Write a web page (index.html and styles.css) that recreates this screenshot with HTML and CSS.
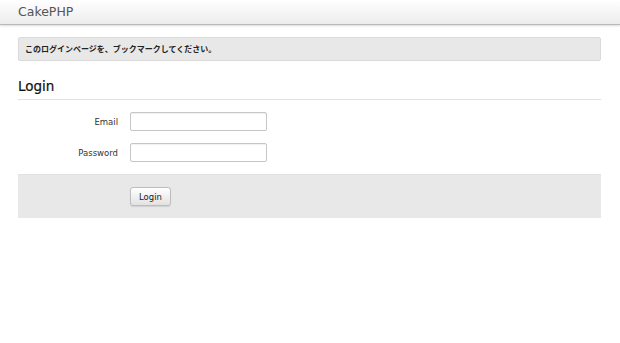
FILE: index.html
```html
<!DOCTYPE html>
<html lang="ja">
<head>
    <meta charset="UTF-8">
    <title>CakePHP</title>
    <link rel="stylesheet" href="styles.css">
</head>
<body>
    <div class="navbar">
        <div class="brand">CakePHP</div>
    </div>

    <div class="container">
        <div class="alert">このログインページを、ブックマークしてください。</div>

        <h2 class="legend">Login</h2>

        <form class="login-form">
            <div class="field">
                <label for="email">Email</label>
                <input type="text" id="email">
            </div>
            <div class="field">
                <label for="password">Password</label>
                <input type="password" id="password">
            </div>
            <div class="form-actions">
                <button type="button">Login</button>
            </div>
        </form>
    </div>
</body>
</html>
```

FILE: styles.css
```css
body {
    margin: 0;
    font-family: 'DejaVu Sans', 'Noto Sans CJK JP', sans-serif;
    font-size: 9px;
    color: #333;
    background: #fff;
}

.navbar {
    height: 24px;
    background: linear-gradient(#ffffff, #ececec);
    border-bottom: 1px solid #b8b8b8;
    box-shadow: 0 1px 2px rgba(0, 0, 0, 0.15);
}

.brand {
    padding: 4px 0 0 18px;
    font-size: 12.5px;
    color: #555;
}

.container {
    padding: 12px 19px 0 18px;
}

.alert {
    height: 22px;
    line-height: 22px;
    padding: 0 6px;
    background: #e8e8e8;
    border: 1px solid #dadada;
    border-radius: 2px;
    font-family: 'Noto Sans CJK JP', sans-serif;
    font-weight: 700;
    font-size: 8px;
    color: #222;
}

.legend {
    margin: 17px 0 0;
    padding-bottom: 5px;
    border-bottom: 1px solid #e2e2e2;
    font-size: 13.5px;
    font-weight: normal;
    color: #111;
    -webkit-text-stroke: 0.2px #111;
}

.login-form {
    margin: 12px 0 0;
}

.field {
    display: flex;
    align-items: center;
    margin-bottom: 12px;
}

.field label {
    width: 100px;
    text-align: right;
    margin-right: 12px;
    font-size: 8.5px;
    color: #333;
}

.field input {
    box-sizing: border-box;
    width: 137px;
    height: 19px;
    border: 1px solid #c6c6c6;
    border-radius: 2px;
    box-shadow: inset 0 1px 1px rgba(0, 0, 0, 0.06);
    padding: 2px 4px;
}

.form-actions {
    margin-top: 12px;
    height: 43px;
    padding-left: 112px;
    display: flex;
    align-items: center;
    background: #e8e8e8;
    border-top: 1px solid #e2e2e2;
}

.form-actions button {
    box-sizing: border-box;
    width: 41px;
    height: 19px;
    padding: 0;
    font-family: 'DejaVu Sans', sans-serif;
    font-size: 8.5px;
    color: #222;
    background: linear-gradient(#ffffff, #e2e2e2);
    border: 1px solid #bdbdbd;
    border-radius: 3px;
    box-shadow: 0 1px 1px rgba(0, 0, 0, 0.1);
}
```
